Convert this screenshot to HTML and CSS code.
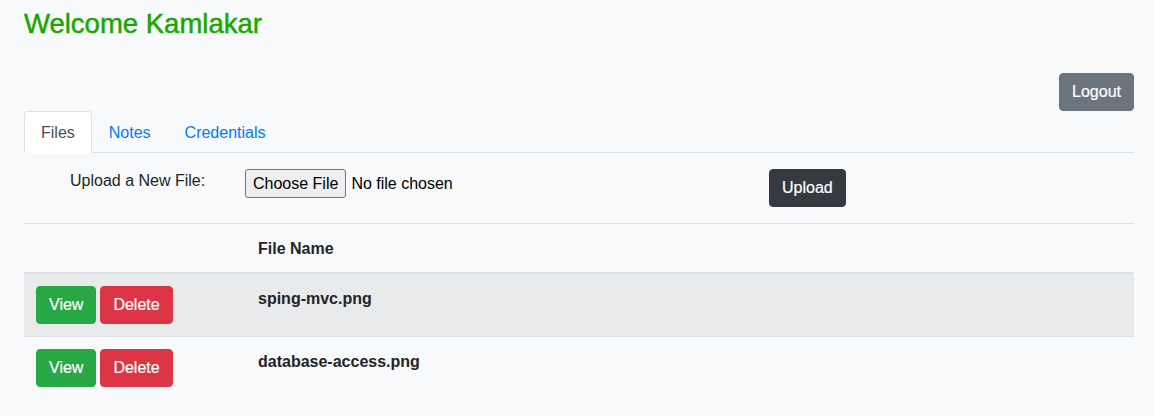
FILE: index.html
```html
<!DOCTYPE html>
<html lang="en">
<head>
<meta charset="utf-8">
<title>Home</title>
<link rel="stylesheet" href="styles.css">
</head>
<body>
<div class="container">
  <h1 class="welcome">Welcome Kamlakar</h1>
  <div class="logout-row">
    <button class="btn btn-secondary" type="button">Logout</button>
  </div>
  <nav class="tabs">
    <a class="tab active" href="#">Files</a>
    <a class="tab" href="#">Notes</a>
    <a class="tab" href="#">Credentials</a>
  </nav>
  <form class="upload-row">
    <label class="upload-label" for="fileUpload">Upload a New File:</label>
    <div class="upload-input"><input id="fileUpload" type="file" class="file-input"></div>
    <div><button class="btn btn-dark" type="button">Upload</button></div>
  </form>
  <table class="files-table">
    <thead>
      <tr><th class="col-actions"></th><th>File Name</th></tr>
    </thead>
    <tbody>
      <tr class="striped">
        <td><button class="btn btn-success" type="button">View</button><button class="btn btn-danger" type="button">Delete</button></td>
        <th>sping-mvc.png</th>
      </tr>
      <tr>
        <td><button class="btn btn-success" type="button">View</button><button class="btn btn-danger" type="button">Delete</button></td>
        <th>database-access.png</th>
      </tr>
    </tbody>
  </table>
</div>
</body>
</html>
```

FILE: styles.css
```css
* { box-sizing: border-box; }
html, body {
  margin: 0;
  padding: 0;
  background: #f8f9fa;
  color: #212529;
  font-family: "Liberation Sans", Arial, sans-serif;
  font-size: 16px;
  line-height: 24px;
}
.container {
  width: 1110px;
  margin-left: 24px;
  padding-top: 7px;
}
.welcome {
  margin: 0;
  font-size: 27.5px;
  line-height: 33.6px;
  font-weight: normal;
  color: #17a800;
  -webkit-text-stroke: 0.45px #17a800;
}
.logout-row {
  display: flex;
  justify-content: flex-end;
  margin-top: 32px;
}
.btn {
  display: inline-block;
  font-family: inherit;
  font-size: 16px;
  line-height: 24px;
  padding: 6px 12px;
  border: 1px solid transparent;
  border-radius: 4px;
  color: #fff;
  -webkit-text-stroke: 0.2px #fff;
  cursor: pointer;
}
.btn-secondary { background: #6c757d; border-color: #6c757d; }
.btn-dark { background: #343a40; border-color: #343a40; }
.btn-success { background: #28a745; border-color: #28a745; margin-right: 4px; }
.btn-danger { background: #dc3545; border-color: #dc3545; }
.tabs {
  display: flex;
  border-bottom: 1px solid #dee2e6;
}
.tab {
  display: block;
  padding: 9px 16px 7px;
  border: 1px solid transparent;
  border-top-left-radius: 4px;
  border-top-right-radius: 4px;
  margin-bottom: -1px;
  color: #007bff;
  text-decoration: none;
}
.tab.active {
  color: #495057;
  background: #fff;
  border-color: #dee2e6 #dee2e6 #fff;
}
.upload-row {
  display: flex;
  align-items: flex-start;
  padding-top: 16px;
  padding-bottom: 16px;
}
.upload-label {
  width: 221px;
  padding-left: 46px;
  line-height: 24px;
}
.upload-input {
  width: 524px;
}
.file-input {
  font-family: "Liberation Sans", Arial, sans-serif;
  font-size: 16px;
  color: #000;
}
.file-input::file-selector-button {
  font-family: "Liberation Sans", Arial, sans-serif;
  font-size: 16px;
  line-height: 19px;
  padding: 4px 7px;
  margin-right: 5px;
  border: 1px solid #767676;
  border-radius: 3px;
  background: #efefef;
  color: #000;
}
.files-table {
  width: 100%;
  border-collapse: collapse;
}
.files-table th, .files-table td {
  padding: 12px;
  text-align: left;
  vertical-align: top;
  border-top: 1px solid #dee2e6;
}
.files-table th {
  padding-top: 13px;
  padding-bottom: 11px;
}
.files-table thead th {
  border-bottom: 2px solid #dee2e6;
  font-weight: bold;
}
.col-actions { width: 20%; }
.files-table tbody th { font-weight: bold; }
.striped { background: #e9eaec; }
```
